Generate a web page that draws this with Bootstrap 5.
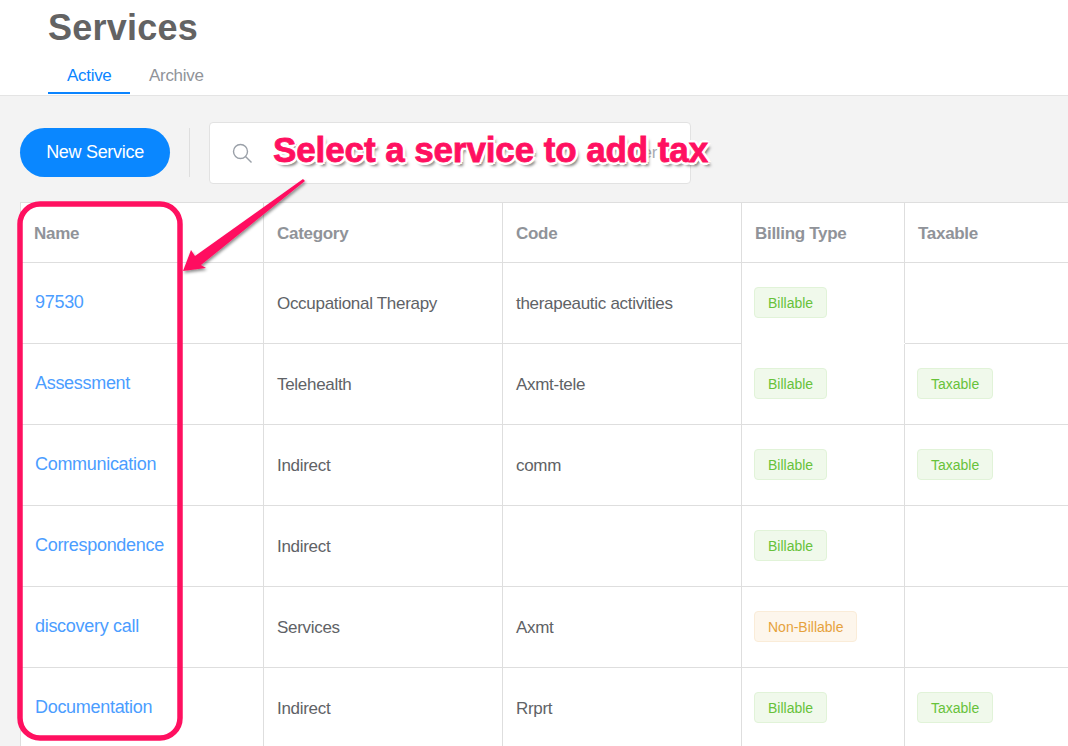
<!DOCTYPE html>
<html lang="en">
<head>
    <meta charset="UTF-8">
    <meta name="viewport" content="width=device-width, initial-scale=1.0">
    <title>Services</title>
    <link rel="stylesheet" href="https://cdn.jsdelivr.net/npm/bootstrap@5.3.0/dist/css/bootstrap.min.css">
    <style>
        html, body {
            height: 746px;
            overflow: hidden;
        }
        body {
            background-color: #f3f3f3;
            font-family: "Liberation Sans", Arial, sans-serif;
            font-size: 17px;
            letter-spacing: -.3px;
            color: #606266;
            position: relative;
        }
        .page-head {
            height: 96px;
            background: #fff;
            border-bottom: 1px solid #e4e4e4;
            padding-left: 48px;
        }
        .page-title {
            font-size: 36px;
            font-weight: 700;
            line-height: 40px;
            margin: 0;
            padding-top: 8px;
            letter-spacing: .25px;
            color: #636363;
        }
        .head-tabs {
            margin-top: 8px;
            height: 38px;
        }
        .head-tab {
            padding: 1px 19px 0;
            height: 38px;
            line-height: 37px;
            color: #909399;
            text-decoration: none;
        }
        .head-tab.is-on {
            color: #0a84ff;
            border-bottom: 2px solid #0a84ff;
            width: 82px;
        }
        .tool-row {
            padding: 26px 0 18px 20px;
            height: 106px;
        }
        .btn-new {
            width: 150px;
            height: 49px;
            margin-top: 6px;
            border-radius: 25px;
            background: #0a87ff;
            border: 0;
            color: #fff;
            font-size: 18px;
            letter-spacing: -.3px;
        }
        .tool-sep {
            width: 1px;
            height: 49px;
            margin: 6px 19px;
            background: #dedede;
        }
        .search-box {
            width: 482px;
            height: 62px;
            background: #fff;
            border: 1px solid #e2e2e2;
            border-radius: 4px;
            padding: 0 33px 0 22px;
            color: #a8abb2;
            white-space: nowrap;
        }
        .svc-table {
            width: 1048px;
            margin-left: 20px;
            table-layout: fixed;
            border-collapse: collapse;
            background: #fff;
        }
        .svc-table th, .svc-table td {
            border: 1px solid #dedede;
            padding: 1px 13px 0;
            vertical-align: middle;
            height: 81px;
        }
        .svc-table th {
            height: 60px;
            font-weight: 700;
            color: #909399;
            padding-top: 2px;
        }
        .svc-table td.name-cell {
            padding: 0 13px 1px;
        }
        .svc-table a {
            color: #4b9dff;
            font-size: 18px;
            text-decoration: none;
            margin-left: 1px;
        }
        .svc-table .no-bottom {
            border-bottom-color: #fff;
        }
        .tag-pill {
            display: inline-block;
            height: 31px;
            line-height: 31px;
            padding: 0 13px;
            margin: -3px 0 0 -1px;
            vertical-align: middle;
            border-radius: 4px;
            font-size: 14px;
            letter-spacing: 0;
            border: 1px solid;
        }
        .tag-ok {
            background: #f0f9eb;
            border-color: #e1f3d8;
            color: #67c23a;
        }
        .tag-warn {
            background: #fdf6ec;
            border-color: #faecd8;
            color: #e6a23c;
        }
        .note-layer {
            position: absolute;
            left: 0;
            top: 0;
            pointer-events: none;
        }
        .note-text {
            position: absolute;
            left: 273px;
            top: 128px;
            font-size: 35px;
            line-height: 44px;
            font-weight: 700;
            letter-spacing: -.1px;
            color: #ff1060;
            white-space: nowrap;
            -webkit-text-stroke: .8px #ff1060;
            text-shadow: 3px 0 0 #fff, -3px 0 0 #fff, 0 3px 0 #fff, 0 -3px 0 #fff, 2px 2px 0 #fff, -2px -2px 0 #fff, 2px -2px 0 #fff, -2px 2px 0 #fff, 3px 4px 3px rgba(0, 0, 0, .5);
        }
    </style>
</head>
<body>
    <div class="page-head">
        <h1 class="page-title">Services</h1>
        <div class="head-tabs d-flex">
            <a class="head-tab is-on" href="#">Active</a>
            <a class="head-tab" href="#">Archive</a>
        </div>
    </div>

    <div class="tool-row d-flex align-items-start">
        <button class="btn-new" type="button">New Service</button>
        <div class="tool-sep"></div>
        <div class="search-box d-flex align-items-center justify-content-between">
            <svg width="20" height="20" viewBox="0 0 20 20" fill="none" stroke="#9aa0a8" stroke-width="1.4">
                <circle cx="8.5" cy="8.5" r="7"/>
                <path d="M13.5 13.5l6 6"/>
            </svg>
            <span>Filter</span>
        </div>
    </div>

    <table class="svc-table">
        <colgroup>
            <col style="width:243px"><col style="width:239px"><col style="width:239px"><col style="width:163px"><col style="width:164px">
        </colgroup>
        <thead>
            <tr><th>Name</th><th>Category</th><th>Code</th><th>Billing Type</th><th>Taxable</th></tr>
        </thead>
        <tbody>
            <tr>
                <td class="name-cell"><a href="#">97530</a></td><td>Occupational Therapy</td><td>therapeautic activities</td>
                <td class="no-bottom"><span class="tag-pill tag-ok">Billable</span></td><td></td>
            </tr>
            <tr>
                <td class="name-cell"><a href="#">Assessment</a></td><td>Telehealth</td><td>Axmt-tele</td>
                <td><span class="tag-pill tag-ok">Billable</span></td><td><span class="tag-pill tag-ok">Taxable</span></td>
            </tr>
            <tr>
                <td class="name-cell"><a href="#">Communication</a></td><td>Indirect</td><td>comm</td>
                <td><span class="tag-pill tag-ok">Billable</span></td><td><span class="tag-pill tag-ok">Taxable</span></td>
            </tr>
            <tr>
                <td class="name-cell"><a href="#">Correspondence</a></td><td>Indirect</td><td></td>
                <td><span class="tag-pill tag-ok">Billable</span></td><td></td>
            </tr>
            <tr>
                <td class="name-cell"><a href="#">discovery call</a></td><td>Services</td><td>Axmt</td>
                <td><span class="tag-pill tag-warn">Non-Billable</span></td><td></td>
            </tr>
            <tr>
                <td class="name-cell"><a href="#">Documentation</a></td><td>Indirect</td><td>Rrprt</td>
                <td><span class="tag-pill tag-ok">Billable</span></td><td><span class="tag-pill tag-ok">Taxable</span></td>
            </tr>
        </tbody>
    </table>

    <!-- annotation drawn over the screenshot -->
    <svg class="note-layer" width="1068" height="746" viewBox="0 0 1068 746">
        <defs>
            <filter id="arrow-shadow" x="-20%" y="-20%" width="140%" height="140%">
                <feDropShadow dx="1" dy="2" stdDeviation="1.5" flood-color="#000" flood-opacity=".45"/>
            </filter>
        </defs>
        <rect x="20" y="204" width="160" height="534" rx="20" fill="none" stroke="#ff1060" stroke-width="5.5"/>
        <path d="M303 179L305 181L201 265L206 268L183 271L191 250L195 256Z" fill="#ff1060" filter="url(#arrow-shadow)"/>
    </svg>
    <div class="note-text">Select a service to add tax</div>
</body>
</html>
